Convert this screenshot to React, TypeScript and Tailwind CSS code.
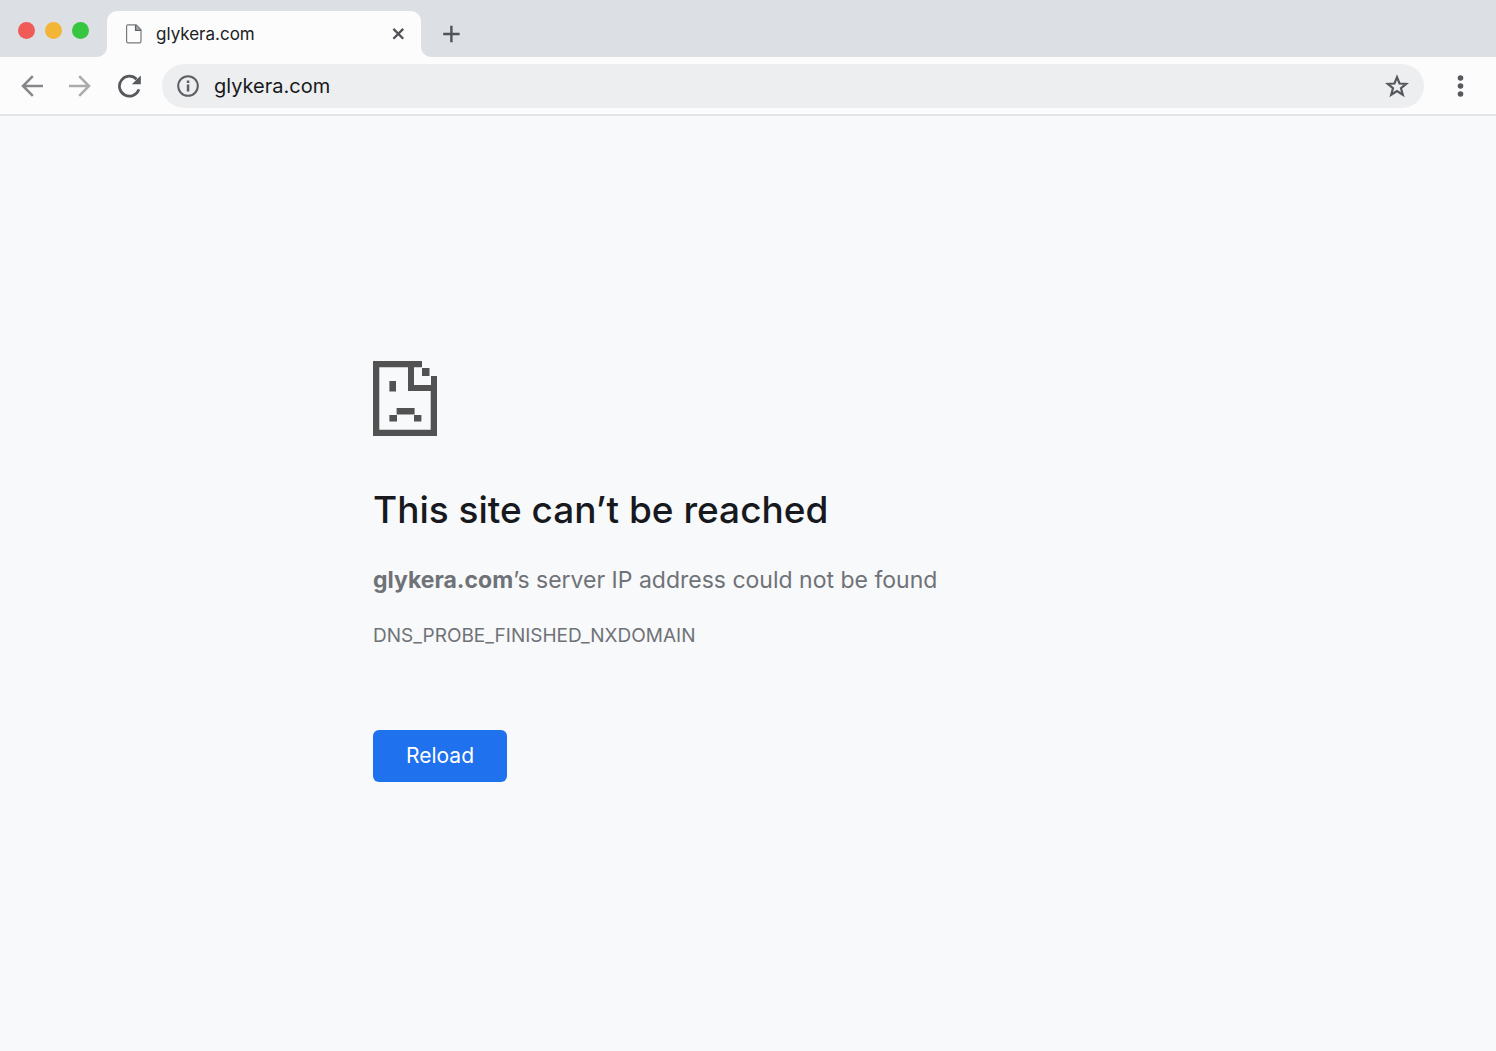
import { useState } from "react";

const HOST = "glykera.com";

function TabFlare({ className }: { className: string }) {
  return (
    <svg className={className} viewBox="0 0 10 10" aria-hidden="true">
      <path d="M10 0v10H0A10 10 0 0 0 10 0z" fill="#fcfcfd" />
    </svg>
  );
}

function PageIcon() {
  return (
    <svg className="h-5 w-4 shrink-0" viewBox="0 0 16 20" fill="none" aria-hidden="true">
      <path
        d="M2 .8h8.2L15 5.8v11.4a1.6 1.6 0 0 1-1.6 1.6H2A1.6 1.6 0 0 1 .6 17.2V2.2A1.4 1.4 0 0 1 2 .8z"
        stroke="#77797d"
        strokeWidth="1.2"
      />
      <path d="M9.6 1v5.4H15" stroke="#5f6368" strokeWidth="1.4" />
      <path d="M10 1.4 14.6 6H10z" fill="#5f6368" fillOpacity=".55" />
    </svg>
  );
}

function ArrowIcon({ className }: { className: string }) {
  return (
    <svg className={className} viewBox="0 0 24 24" fill="none" stroke="currentColor" strokeWidth="2.5" aria-hidden="true">
      <path d="M23 12H3M12.8 2.2 3 12l9.8 9.8" />
    </svg>
  );
}

function ReloadIcon() {
  return (
    <svg className="size-6" viewBox="0 0 24 24" aria-hidden="true">
      <path
        d="M21.9 15.4A10 10 0 1 1 19.6 5.2"
        fill="none"
        stroke="currentColor"
        strokeWidth="2.7"
      />
      <path d="M23.8 1.6v8.6h-8.9z" fill="currentColor" />
    </svg>
  );
}

function InfoIcon() {
  return (
    <svg className="size-6 shrink-0 text-[#5b5e63]" viewBox="0 0 24 24" aria-hidden="true">
      <circle cx="12" cy="12" r="9.8" fill="none" stroke="currentColor" strokeWidth="2" />
      <path d="M10.8 10.4h2.5v7.2h-2.5zM10.8 6.4h2.5v2.5h-2.5z" fill="currentColor" />
    </svg>
  );
}

function StarIcon() {
  return (
    <svg className="size-6" viewBox="0 0 24 24" fill="none" stroke="currentColor" strokeWidth="2.2" aria-hidden="true">
      <path d="M12 3.2l2.5 6.3 6.7.4-5.2 4.3 1.8 6.6-5.8-3.7-5.8 3.7L8 14.2 2.8 9.9l6.7-.4z" />
    </svg>
  );
}

function SadPageIcon() {
  return (
    <svg className="h-[75px] w-16" viewBox="0 0 64 75" fill="#525252" aria-hidden="true">
      {/* Page outline */}
      <path d="M0 0h49v6.3H41V24h17v-9h6v60H0zM6.3 6.3v62.4h51.4V30H35V6.3z" fillRule="evenodd" />
      {/* Folded corner */}
      <path d="M49 7h7.5v8H49z" />
      {/* Face */}
      <path d="M16.4 20H23v10.4h-6.6zM23.6 47h18v6.4h-18zM16.4 54H24v6.5h-7.6zM41 54h7.4v6.5H41z" />
    </svg>
  );
}

function TabStrip() {
  return (
    <div className="flex h-[57px] items-end bg-[#dcdfe4] pl-[18px]">
      <div className="flex gap-[10px] pb-[18px]">
        <button className="size-[17px] rounded-full bg-[#f05b57]" aria-label="Close window" />
        <button className="size-[17px] rounded-full bg-[#f3b536]" aria-label="Minimize window" />
        <button className="size-[17px] rounded-full bg-[#36c63f]" aria-label="Zoom window" />
      </div>

      {/* Active tab */}
      <div className="relative ml-[18px] flex h-[46px] w-[314px] items-center rounded-t-[10px] bg-[#fcfcfd] pl-[19px] pr-4">
        <TabFlare className="absolute -left-[10px] bottom-0 size-[10px]" />
        <TabFlare className="absolute -right-[10px] bottom-0 size-[10px] -scale-x-100" />
        <PageIcon />
        <span className="ml-[14px] flex-1 text-[17px] leading-5 text-[#202124]">{HOST}</span>
        <button className="text-[#4f5256]" aria-label="Close tab">
          <svg className="size-[14px]" viewBox="0 0 14 14" stroke="currentColor" strokeWidth="2.3" aria-hidden="true">
            <path d="M2.4 1.9l9.8 9.8M12.2 1.9l-9.8 9.8" />
          </svg>
        </button>
      </div>

      <button className="mb-[14px] ml-[21px] text-[#4f5256]" aria-label="New tab">
        <svg className="size-[18px]" viewBox="0 0 18 18" stroke="currentColor" strokeWidth="2.4" aria-hidden="true">
          <path d="M9.4.8v16.4M1.2 9h16.4" />
        </svg>
      </button>
    </div>
  );
}

function Toolbar() {
  const [address, setAddress] = useState(HOST);

  return (
    <div className="flex h-[59px] items-center border-b-2 border-[#e2e4e8] bg-[#fcfcfd] pl-5">
      <button className="text-[#85878a]" aria-label="Back">
        <ArrowIcon className="size-6" />
      </button>
      <button className="ml-6 text-[#a9abad]" aria-label="Forward">
        <ArrowIcon className="size-6 rotate-180" />
      </button>
      <button className="ml-[25px] text-[#55585c]" aria-label="Reload page">
        <ReloadIcon />
      </button>

      {/* Omnibox */}
      <div className="ml-[21px] flex h-11 flex-1 items-center rounded-full bg-[#edeef0] pl-[14px] pr-[15px]">
        <InfoIcon />
        <input
          className="ml-[14px] min-w-0 flex-1 bg-transparent text-[20px] leading-6 text-[#17181b] outline-none"
          aria-label="Address"
          value={address}
          onChange={(e) => setAddress(e.target.value)}
        />
        <button className="text-[#55585c]" aria-label="Bookmark this page">
          <StarIcon />
        </button>
      </div>

      <button className="mx-6 text-[#55585c]" aria-label="Menu">
        <svg className="size-6" viewBox="0 0 24 24" fill="currentColor" aria-hidden="true">
          <circle cx="12.5" cy="4" r="2.8" />
          <circle cx="12.5" cy="12" r="2.8" />
          <circle cx="12.5" cy="20" r="2.8" />
        </svg>
      </button>
    </div>
  );
}

export default function App() {
  return (
    <div className="flex min-h-screen flex-col bg-[#f8f9fa] font-['Inter','Liberation_Sans',sans-serif]">
      <TabStrip />
      <Toolbar />

      <main className="mx-auto w-full max-w-[750px] pt-[245px]">
        <SadPageIcon />
        <h1 className="mt-[50px] text-[37px] font-medium leading-[48px] text-[#17191f]">
          This site can’t be reached
        </h1>
        <p className="mt-[30px] text-[23px] leading-8 text-[#6f7277]">
          <strong className="font-bold">{HOST}</strong>’s server IP address could not be found
        </p>
        <p className="mt-7 text-[19px] leading-6 text-[#6f7277]">DNS_PROBE_FINISHED_NXDOMAIN</p>
        <button className="mt-[82px] h-[52px] rounded-md bg-[#1f71ee] px-[33px] text-[21px] text-white">
          Reload
        </button>
      </main>
    </div>
  );
}
